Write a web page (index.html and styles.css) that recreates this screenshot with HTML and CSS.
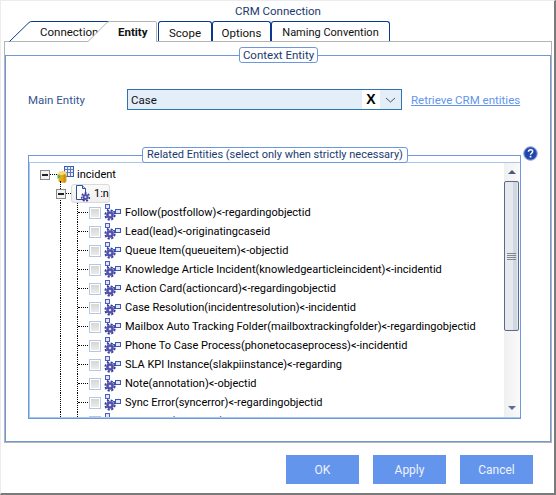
FILE: index.html
```html
<!DOCTYPE html>
<html>
<head>
    <link rel="stylesheet" href="styles.css">
</head>
<body>
    <svg class="defs" width="0" height="0">
        <symbol id="gears" viewBox="0 0 17 17">
            <rect x="1.500" y="0.500" width="4" height="4" fill="#dfe8fb" stroke="#4a5fc0"/>
            <rect x="11.500" y="5.500" width="5" height="4" fill="#dfe8fb" stroke="#3f55b5"/>
            <path d="M3.500 4.500v2M9 7.500h2.500" stroke="#3f55b5"/>
            <circle cx="6" cy="11" r="3.800" fill="#4f51ad"/>
            <circle cx="6" cy="11" r="4.700" fill="none" stroke="#3b3d96" stroke-width="1.800" stroke-dasharray="2.200 1.500"/>
            <circle cx="6" cy="11" r="1.300" fill="#d5d9f5"/>
        </symbol>
    </svg>

    <div class="window">
        <div class="title">CRM Connection</div>

        <div class="tabs">
            <div class="tab tab-connection">
                <svg class="tab-shape" width="100" height="21"><path d="M0.500 20.500L20 1.500Q21 0.500 23 0.500H100" fill="none" stroke="#0a3a8c"/></svg>
                <span class="tab-text">Connection</span>
            </div>
            <div class="tab tab-entity">
                <svg class="tab-shape" width="70" height="21"><path d="M0 21L19 1.500Q20 0.500 22 0.500H68.500V21Z" fill="#fff"/><path d="M0 20.500L19 1.500Q20 0.500 22 0.500H67Q68.500 0.500 68.500 2V21" fill="none" stroke="#b4b4b4"/></svg>
                <span class="tab-text">Entity</span>
            </div>
            <div class="tab tab-plain tab-scope">Scope</div>
            <div class="tab tab-plain tab-options">Options</div>
            <div class="tab tab-plain tab-naming">Naming Convention</div>
        </div>

        <div class="panel">
            <div class="group">
                <div class="legend legend-context">Context Entity</div>

                <div class="entity-row">
                    <label class="entity-label">Main Entity</label>
                    <div class="combo">
                        <span class="combo-text">Case</span>
                        <span class="combo-clear">X</span>
                        <svg class="combo-arrow" width="11" height="6"><path d="M1 1l4.500 4L10 1" fill="none" stroke="#555"/></svg>
                    </div>
                    <a class="retrieve" href="#">Retrieve CRM entities</a>
                </div>

                <div class="related">
                    <div class="legend legend-related">Related Entities (select only when strictly necessary)</div>
                    <svg class="help" width="15" height="15" viewBox="0 0 15 15">
                        <circle cx="7.500" cy="7.500" r="6.800" fill="#2f55b8" stroke="#8fa6d8"/>
                        <circle cx="7.500" cy="7.500" r="5.200" fill="#1f45a8"/>
                        <path d="M5.400 5.800Q5.600 3.800 7.600 3.800Q9.700 3.800 9.700 5.600Q9.700 6.700 8.500 7.300Q7.500 7.800 7.500 8.800" fill="none" stroke="#fff" stroke-width="1.500"/>
                        <rect x="6.700" y="9.800" width="1.700" height="1.700" fill="#fff"/>
                    </svg>

                    <div class="tree-box">
                        <div class="tree">
                            <div class="node node-root">
                                <span class="expander"></span>
                                <span class="dash dash-root"></span>
                                <svg class="icon-root" width="17" height="18" viewBox="0 0 17 18">
                                    <rect x="7.500" y="0.500" width="9" height="10" fill="#e8eefc" stroke="#3c5aa8"/>
                                    <path d="M7.500 3.500h9M7.500 6.500h9M10.500 0.500v10M13.500 0.500v10" stroke="#5b78c0"/>
                                    <path d="M1.500 7h8v8.500q-4 2.500-8 0z" fill="#e5a81e"/>
                                    <ellipse cx="5.500" cy="7" rx="4" ry="2" fill="#f7dc78"/>
                                    <path d="M7.500 8v9" stroke="#b87d10" stroke-width="2" opacity="0.600"/>
                                    <path d="M0.500 8l3 2.500-3 2.500z" fill="#3fbf3f"/>
                                </svg>
                                <span class="node-text">incident</span>
                            </div>
                            <div class="node node-rel">
                                <span class="expander-stem"></span>
                                <span class="expander"></span>
                                <span class="dash dash-rel"></span>
                                <div class="selected">
                                    <svg class="icon-rel" width="16" height="17" viewBox="0 0 16 17">
                                        <path d="M1.500 0.500h6l3 3v11h-9z" fill="#fff" stroke="#33509c"/>
                                        <path d="M7.500 0.500v3h3" fill="#cdd9f5" stroke="#33509c"/>
                                        <circle cx="10.500" cy="12" r="3" fill="#4f51ad"/>
                                        <circle cx="10.500" cy="12" r="3.900" fill="none" stroke="#3b3d96" stroke-width="1.500" stroke-dasharray="2 1.400"/>
                                        <circle cx="10.500" cy="12" r="1.100" fill="#d5d9f5"/>
                                    </svg>
                                    <span class="node-text">1:n</span>
                                </div>
                            </div>
                            <div class="item"><span class="guide guide-first"></span><span class="guide guide-second"></span><span class="check"></span><svg class="gears" width="17" height="17"><use href="#gears"/></svg><span class="item-text">Follow(postfollow)&lt;-regardingobjectid</span></div>
                            <div class="item"><span class="guide guide-first"></span><span class="guide guide-second"></span><span class="check"></span><svg class="gears" width="17" height="17"><use href="#gears"/></svg><span class="item-text">Lead(lead)&lt;-originatingcaseid</span></div>
                            <div class="item"><span class="guide guide-first"></span><span class="guide guide-second"></span><span class="check"></span><svg class="gears" width="17" height="17"><use href="#gears"/></svg><span class="item-text">Queue Item(queueitem)&lt;-objectid</span></div>
                            <div class="item"><span class="guide guide-first"></span><span class="guide guide-second"></span><span class="check"></span><svg class="gears" width="17" height="17"><use href="#gears"/></svg><span class="item-text">Knowledge Article Incident(knowledgearticleincident)&lt;-incidentid</span></div>
                            <div class="item"><span class="guide guide-first"></span><span class="guide guide-second"></span><span class="check"></span><svg class="gears" width="17" height="17"><use href="#gears"/></svg><span class="item-text">Action Card(actioncard)&lt;-regardingobjectid</span></div>
                            <div class="item"><span class="guide guide-first"></span><span class="guide guide-second"></span><span class="check"></span><svg class="gears" width="17" height="17"><use href="#gears"/></svg><span class="item-text">Case Resolution(incidentresolution)&lt;-incidentid</span></div>
                            <div class="item"><span class="guide guide-first"></span><span class="guide guide-second"></span><span class="check"></span><svg class="gears" width="17" height="17"><use href="#gears"/></svg><span class="item-text">Mailbox Auto Tracking Folder(mailboxtrackingfolder)&lt;-regardingobjectid</span></div>
                            <div class="item"><span class="guide guide-first"></span><span class="guide guide-second"></span><span class="check"></span><svg class="gears" width="17" height="17"><use href="#gears"/></svg><span class="item-text">Phone To Case Process(phonetocaseprocess)&lt;-incidentid</span></div>
                            <div class="item"><span class="guide guide-first"></span><span class="guide guide-second"></span><span class="check"></span><svg class="gears" width="17" height="17"><use href="#gears"/></svg><span class="item-text">SLA KPI Instance(slakpiinstance)&lt;-regarding</span></div>
                            <div class="item"><span class="guide guide-first"></span><span class="guide guide-second"></span><span class="check"></span><svg class="gears" width="17" height="17"><use href="#gears"/></svg><span class="item-text">Note(annotation)&lt;-objectid</span></div>
                            <div class="item"><span class="guide guide-first"></span><span class="guide guide-second"></span><span class="check"></span><svg class="gears" width="17" height="17"><use href="#gears"/></svg><span class="item-text">Sync Error(syncerror)&lt;-regardingobjectid</span></div>
                            <div class="item"><span class="guide guide-first"></span><span class="guide guide-second"></span><span class="check"></span><svg class="gears" width="17" height="17"><use href="#gears"/></svg><span class="item-text">Sampling(sampling)&lt;-regardingobjectid</span></div>
                        </div>

                        <div class="scrollbar">
                            <div class="scroll-btn"><span class="arrow-up"></span></div>
                            <div class="thumb">
                                <span class="grip"></span>
                            </div>
                            <div class="scroll-track"></div>
                            <div class="scroll-btn"><span class="arrow-down"></span></div>
                        </div>
                    </div>
                </div>
            </div>
        </div>

        <div class="footer">
            <button class="button">OK</button>
            <button class="button">Apply</button>
            <button class="button">Cancel</button>
        </div>
    </div>
</body>
</html>
```

FILE: styles.css
```css
body {
    margin: 0;
    background-color: white;
    font-family: Roboto, "Noto Sans", sans-serif;
    font-size: 11.500px;
    color: #111;
}
.defs {
    position: absolute;
}
.window {
    box-sizing: border-box;
    width: 556px;
    height: 495px;
    padding: 3px 2px 0 3px;
    overflow: hidden;
    background-color: white;
    border-top: 1px solid #ececec;
    border-left: 1px solid #ececec;
    border-right: 2px solid #7a7a7a;
    border-bottom: 2px solid #7a7a7a;
}
.title {
    height: 17px;
    line-height: 14px;
    text-align: center;
    color: #1c3a70;
}

/* tabs */
.tabs {
    display: flex;
    height: 21px;
    padding-left: 5px;
}
.tab {
    position: relative;
    box-sizing: border-box;
    height: 20px;
    line-height: 23px;
}
.tab-shape {
    position: absolute;
    left: 0;
    top: 0;
}
.tab-text {
    position: relative;
}
.tab-connection {
    width: 98px;
    padding-left: 31px;
}
.tab-entity {
    width: 70px;
    height: 21px;
    margin-left: -19px;
    padding-left: 30px;
    font-weight: bold;
    z-index: 1;
}
.tab-plain {
    text-align: center;
    background-color: white;
    border: 1px solid #0a3a8c;
    border-bottom: none;
    border-radius: 3px 3px 0 0;
    line-height: 22px;
}
.tab-scope {
    width: 54px;
}
.tab-options {
    width: 59px;
}
.tab-naming {
    width: 119px;
    font-size: 11px;
}

/* panel with the group boxes */
.panel {
    box-sizing: border-box;
    width: 548px;
    height: 402px;
    margin-top: -1px;
    padding-top: 13px;
    border: 1px solid #b4b4b4;
    background-color: white;
}
.group {
    position: relative;
    box-sizing: border-box;
    height: 387px;
    padding: 33px 0 0 22px;
    border: 1px solid #6f97dc;
}
.legend {
    position: absolute;
    top: -9px;
    box-sizing: border-box;
    height: 16px;
    line-height: 14px;
    border: 1px solid #6f97dc;
    border-radius: 3px;
    background-color: white;
    color: #1c3a70;
    text-align: center;
    white-space: nowrap;
}
.legend-context {
    left: 233px;
    width: 79px;
}
.legend-related {
    left: 113px;
    width: 266px;
    font-size: 11px;
}

/* main entity row */
.entity-row {
    display: flex;
    align-items: center;
    height: 21px;
}
.entity-label {
    width: 99px;
    color: #36558f;
}
.combo {
    box-sizing: border-box;
    display: flex;
    align-items: center;
    width: 275px;
    height: 21px;
    padding-left: 3px;
    border: 1px solid #2f73b0;
    background-color: #e3eef9;
}
.combo-text {
    flex: 1;
}
.combo-clear {
    width: 18px;
    height: 19px;
    line-height: 19px;
    text-align: center;
    background-color: white;
    color: black;
    font-family: "Liberation Sans", sans-serif;
    font-size: 14px;
    font-weight: bold;
}
.combo-arrow {
    margin: 0 5px;
}
.retrieve {
    margin-left: 9px;
    color: #6495ed;
}

/* related entities */
.related {
    position: relative;
    box-sizing: border-box;
    width: 493px;
    height: 264px;
    margin-top: 45px;
    padding-top: 6px;
    border: 1px solid #6f97dc;
}
.help {
    position: absolute;
    top: -10px;
    right: -18px;
}
.tree-box {
    display: flex;
    box-sizing: border-box;
    height: 256px;
    overflow: hidden;
    border: 1px solid #a8c6ee;
    border-right: none;
}
.tree {
    flex: 1;
    height: 254px;
    padding-top: 2px;
    overflow: hidden;
    color: black;
    font-size: 11px;
}
.node {
    display: flex;
    align-items: center;
    height: 19px;
}
.node-root {
    padding-left: 10px;
}
.node-rel {
    padding-left: 26px;
}
.expander {
    position: relative;
    box-sizing: border-box;
    flex: none;
    width: 10px;
    height: 10px;
    border: 1px solid #8a8a8a;
    background-color: #f2f2f2;
}
.expander::after {
    content: "";
    position: absolute;
    left: 1px;
    top: 3px;
    width: 6px;
    height: 2px;
    background-color: #222;
}
.expander-stem {
    flex: none;
    align-self: flex-start;
    height: 22px;
    margin: -3px -5px 0 4px;
    border-left: 1px dotted black;
}
.dash {
    flex: none;
    height: 0;
    border-top: 1px dotted black;
}
.dash-root {
    width: 7px;
}
.dash-rel {
    width: 5px;
}
.icon-root {
    flex: none;
    margin-right: 3px;
}
.node-text {
    margin-top: -1px;
}
.guide {
    flex: none;
    align-self: stretch;
    border-left: 1px dotted black;
}
.guide-first {
    width: 16px;
    margin-left: 30px;
}
.selected {
    display: flex;
    align-items: center;
    box-sizing: border-box;
    width: 39px;
    height: 19px;
    padding-left: 3px;
    border: 1px solid #dadada;
    border-radius: 3px;
    background-image: linear-gradient(#fafafa, #eeeeee);
}
.icon-rel {
    flex: none;
    margin-right: 3px;
}
.item {
    display: flex;
    align-items: center;
    height: 19px;
    white-space: nowrap;
}
.item-text {
    margin-top: -1px;
}
.guide-second {
    position: relative;
    width: 11px;
}
.guide-second::after {
    content: "";
    position: absolute;
    left: 0;
    top: 9px;
    width: 10px;
    border-top: 1px dotted black;
}
.check {
    flex: none;
    box-sizing: border-box;
    width: 12px;
    height: 12px;
    border: 1px solid #b6c8e0;
    background-image: linear-gradient(#d4d4d4, #eeeeee);
    box-shadow: inset 0 0 0 1px white;
}
.gears {
    flex: none;
    margin: 0 4px 0 3px;
}

/* scrollbar */
.scrollbar {
    display: flex;
    flex-direction: column;
    flex: none;
    width: 16px;
    height: 254px;
    background-image: linear-gradient(to right, #f0f0f0, #fafafa);
}
.scroll-btn {
    display: flex;
    align-items: center;
    justify-content: center;
    flex: none;
    height: 18px;
}
.arrow-up {
    width: 0;
    height: 0;
    border-left: 4px solid transparent;
    border-right: 4px solid transparent;
    border-bottom: 4px solid #4b5a78;
}
.arrow-down {
    width: 0;
    height: 0;
    border-left: 4px solid transparent;
    border-right: 4px solid transparent;
    border-top: 4px solid #5c6c9c;
}
.thumb {
    display: flex;
    align-items: center;
    justify-content: center;
    flex: none;
    box-sizing: border-box;
    width: 15px;
    height: 150px;
    border: 1px solid #5a6a8a;
    border-radius: 2px;
    background-image: linear-gradient(to right, #e6e9ee 60%, #cfd8e2 60%, #cfd8e2 90%, #e6e9ee 90%);
}
.grip {
    width: 9px;
    height: 7px;
    background-image: repeating-linear-gradient(#808890 0, #808890 1px, transparent 1px, transparent 2px);
}
.scroll-track {
    flex: 1;
}

/* footer buttons */
.footer {
    display: flex;
    justify-content: flex-end;
    gap: 14px;
    margin-top: 12px;
    padding-right: 19px;
}
.button {
    width: 73px;
    height: 29px;
    padding: 0;
    border: none;
    background-color: #6495ed;
    color: #eef3ff;
    font-family: Roboto, "Noto Sans", sans-serif;
    font-size: 12px;
}
```
